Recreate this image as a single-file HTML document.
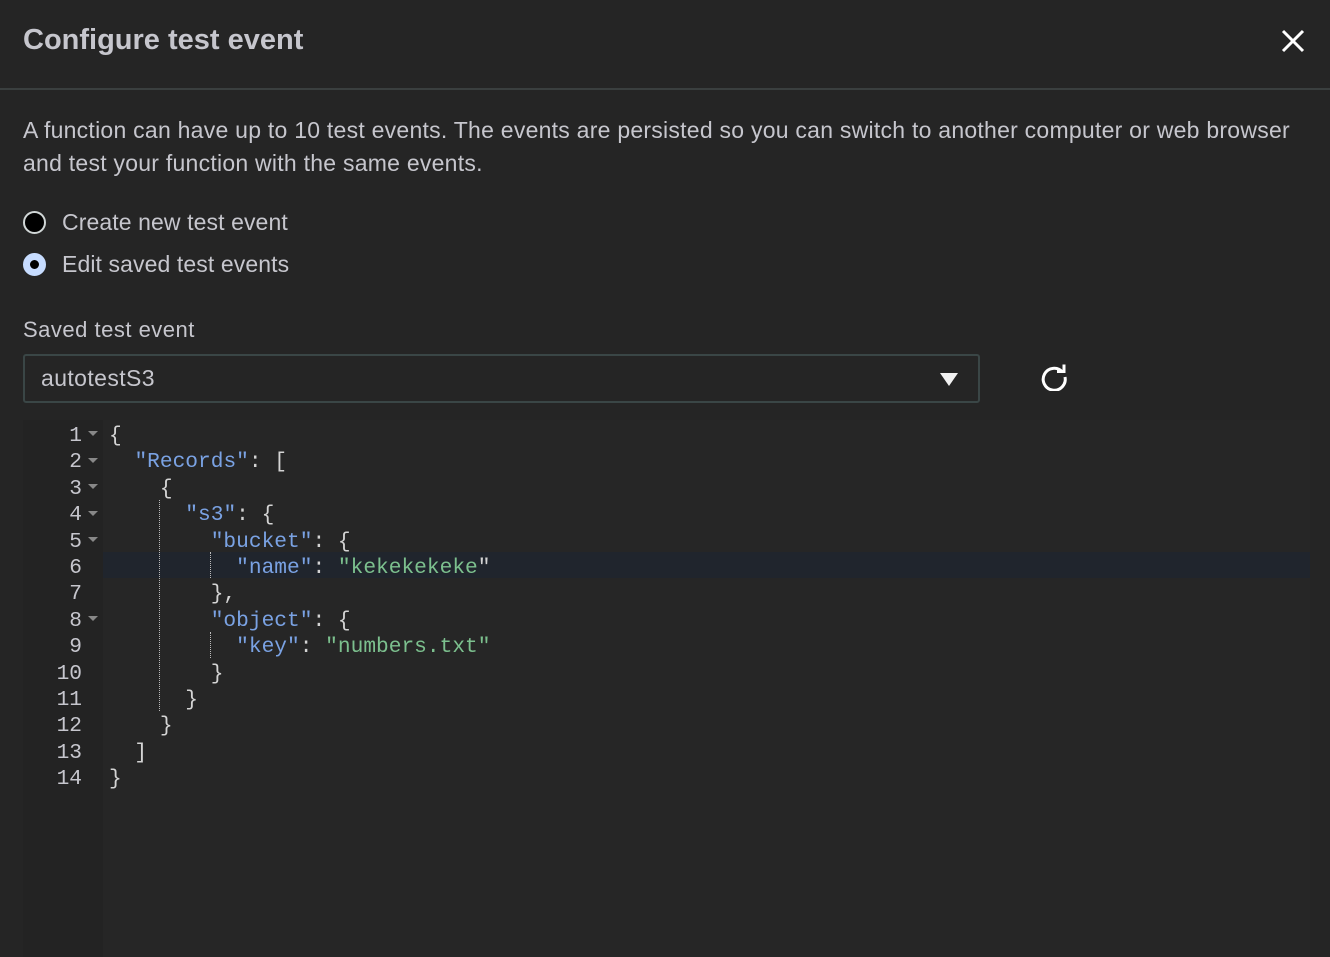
<!DOCTYPE html>
<html><head><meta charset="utf-8"><style>
*{margin:0;padding:0;box-sizing:border-box}
html,body{width:1330px;height:957px;background:#252525;overflow:hidden;font-family:"Liberation Sans",sans-serif;color:#c6c6cd}
.hdr{position:absolute;left:0;top:0;width:1330px;height:90px;border-bottom:2px solid #3a3f3f}
.title{position:absolute;left:23px;top:24px;font-size:29px;font-weight:bold;color:#c6c6cd}
.close{position:absolute;left:1281px;top:29px}
.desc{position:absolute;left:23px;top:114px;width:1300px;font-size:23px;line-height:33px;letter-spacing:0.25px;white-space:nowrap}
.radio{position:absolute;left:23px;font-size:23px;letter-spacing:0.1px;display:flex;align-items:center}
.rc{width:23px;height:23px;border-radius:50%;margin-right:16px}
.lbl{position:absolute;left:23px;top:317px;font-size:22px;letter-spacing:0.5px}
.sel{position:absolute;left:23px;top:354px;width:957px;height:49px;border:2px solid #3a4646;border-radius:3px;font-size:23px;letter-spacing:0.4px;padding:9px 0 0 16px}
.tri{position:absolute;left:915px;top:17px;width:0;height:0;border-left:9px solid transparent;border-right:9px solid transparent;border-top:13px solid #f2f2f2}
.ref{position:absolute;left:1040px;top:363px}
.gut{position:absolute;left:23px;top:420px;width:80px;height:537px;background:#232323}
.ed{position:absolute;left:103px;top:420px;width:1207px;height:537px;background:#262626}
.hl{position:absolute;left:103px;top:552px;width:1207px;height:26px;background:#20252d}
.code{position:absolute;top:423px;font-family:"Liberation Mono",monospace;font-size:21.2px;line-height:26.4px;white-space:pre}
.nums{left:23px;width:59px;text-align:right;color:#c6c6cd}
.src{left:109px;color:#d4d4d4}
.k{color:#7aa2e3}.s{color:#7cc08e}
.fold{position:absolute;left:88px;width:0;height:0;border-left:5px solid transparent;border-right:5px solid transparent;border-top:5px solid #888}
.g{position:absolute;border-left:1px dotted #bbb}
</style></head><body>
<div class="hdr">
<div class="title">Configure test event</div>
<svg class="close" width="24" height="24" viewBox="0 0 24 24"><path d="M2 2L22 22M22 2L2 22" stroke="#fff" stroke-width="3"/></svg>
</div>
<div class="desc">A function can have up to 10 test events. The events are persisted so you can switch to another computer or web browser<br>and test your function with the same events.</div>
<div class="radio" style="top:209px"><div class="rc" style="background:#000;border:2px solid #d0d6d6"></div>Create new test event</div>
<div class="radio" style="top:251px"><div class="rc" style="background:#000;border:7px solid #c7dcff"></div>Edit saved test events</div>
<div class="lbl">Saved test event</div>
<div class="sel">autotestS3<div class="tri"></div></div>
<svg class="ref" width="28" height="28" viewBox="0 0 28 28"><path d="M22.5 9A11 11 0 1 0 25 14" fill="none" stroke="#fff" stroke-width="3"/><path d="M17 8.5H24V1.5" fill="none" stroke="#fff" stroke-width="3"/></svg>
<div class="gut"></div><div class="ed"></div><div class="hl"></div>
<div class="code nums">1
2
3
4
5
6
7
8
9
10
11
12
13
14</div>
<div class="fold" style="top:431px"></div>
<div class="fold" style="top:458px"></div>
<div class="fold" style="top:484px"></div>
<div class="fold" style="top:511px"></div>
<div class="fold" style="top:537px"></div>
<div class="fold" style="top:616px"></div>
<div class="g" style="left:159px;top:500px;height:211px"></div>
<div class="g" style="left:210px;top:552px;height:26px"></div>
<div class="g" style="left:210px;top:632px;height:26px"></div>
<div class="code src">{
  <span class="k">"Records"</span>: [
    {
      <span class="k">"s3"</span>: {
        <span class="k">"bucket"</span>: {
          <span class="k">"name"</span>: <span class="s">"kekekekeke</span>"
        },
        <span class="k">"object"</span>: {
          <span class="k">"key"</span>: <span class="s">"numbers.txt"</span>
        }
      }
    }
  ]
}</div>
</body></html>
